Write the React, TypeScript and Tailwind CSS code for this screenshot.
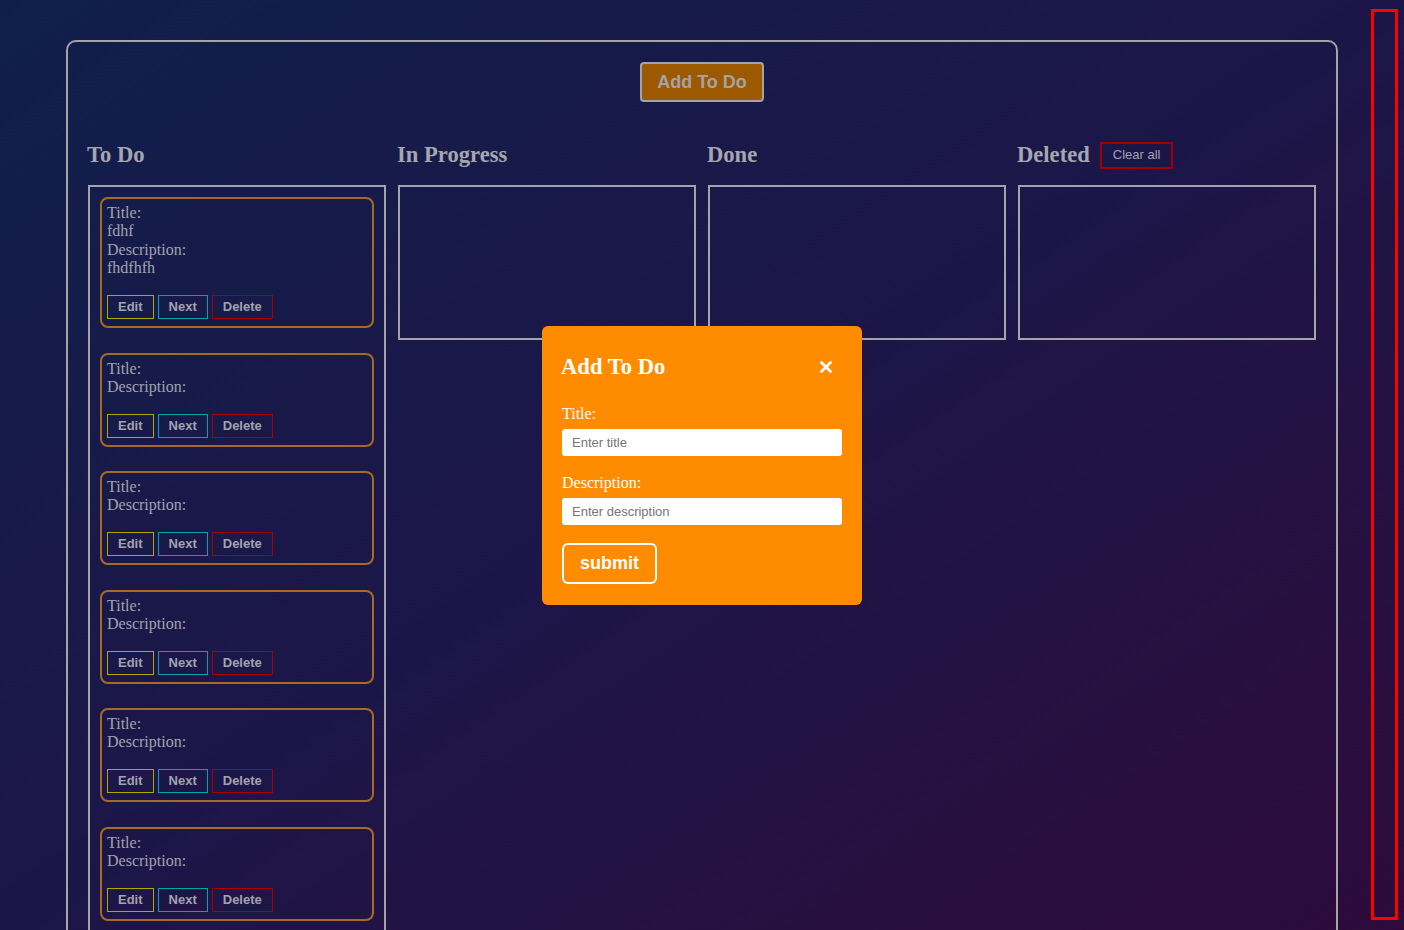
import { X } from "lucide-react";

type Todo = { title: string; description: string };

const TODOS: Todo[] = [
  { title: "fdhf", description: "fhdfhfh" },
  { title: "", description: "" },
  { title: "", description: "" },
  { title: "", description: "" },
  { title: "", description: "" },
  { title: "", description: "" },
];

const serif = "font-['Liberation_Serif',serif]";
const sans = "font-['Liberation_Sans',Arial,sans-serif]";

function TodoCard({ todo }: { todo: Todo }) {
  return (
    <div className="rounded-[8px] border-2 border-[#a66a22] px-[5px] pt-[5px] pb-[7px]">
      <div className={`${serif} text-[16px] leading-[18px] text-[#a3a3ad]`}>
        <div>Title:</div>
        {todo.title && <div className="leading-[18.5px]">{todo.title}</div>}
        <div>Description:</div>
        {todo.description && <div className="leading-[18.5px]">{todo.description}</div>}
      </div>
      <div className={`${sans} mt-[18px] flex gap-[4px] text-[13px] font-bold text-[#a3a3ad]`}>
        <button className="h-6 border border-[#b3a600] px-[10px]">Edit</button>
        <button className="h-6 border border-[#00a6a6] px-[10px]">Next</button>
        <button className="h-6 border border-[#a80000] px-[10px]">Delete</button>
      </div>
    </div>
  );
}

function Column({ title, children, action }: { title: string; children?: React.ReactNode; action?: React.ReactNode }) {
  return (
    <div className="flex flex-col">
      <div className="flex h-[28px] items-center gap-[10px]">
        <h2 className={`${serif} -ml-px text-[22.6px] font-bold leading-[28px] text-[#a6a6ae]`}>{title}</h2>
        {action}
      </div>
      <div className="mt-[16px] flex min-h-[155px] flex-col gap-[24.5px] border-2 border-[#a4a4a8] p-[10px]">
        {children}
      </div>
    </div>
  );
}

export default function App() {
  return (
    <div className="relative h-[930px] w-full overflow-hidden bg-linear-to-br from-[#0f1f4b] via-[#1c1648] to-[#2d0a3b]">
      <div className="mx-[66px] mt-[40px] rounded-[10px] border-2 border-[#a4a4a8] px-[20px] pt-[20px] pb-10">
        <div className="flex justify-center">
          <button
            className={`${sans} h-[40px] rounded-[4px] border-2 border-[#a4a4a8] bg-[#9c5900] px-[15px] text-[18px] font-bold leading-[21px] text-[#a3a3a8]`}
          >
            Add To Do
          </button>
        </div>
        <div className="mt-[39px] grid grid-cols-4 gap-[12px]">
          <Column title="To Do">
            {TODOS.map((t, i) => (
              <TodoCard key={i} todo={t} />
            ))}
          </Column>
          <Column title="In Progress" />
          <Column title="Done" />
          <Column
            title="Deleted"
            action={
              <button className={`${sans} h-[27px] border-2 border-[#a00000] px-[11px] text-[13px] text-[#a3a3ad]`}>
                Clear all
              </button>
            }
          />
        </div>
      </div>

      {/* modal */}
      <div className="fixed inset-0 flex items-center justify-center">
        <div className="w-[320px] rounded-[6px] bg-[#ff8c00] px-[20px] pt-[20px] pb-[21px]">
          <div className="flex h-[42px] items-center justify-between">
            <h2 className={`${serif} -ml-px text-[22.6px] font-bold leading-[28px] text-white`}>Add To Do</h2>
            <X className="mr-[7px] h-[18px] w-[18px] text-white" strokeWidth={3.5} />
          </div>
          <label className={`${serif} mt-[17px] block text-[16px] leading-[18px] text-white`}>Title:</label>
          <input
            className={`${sans} mt-[6px] h-[27px] w-full rounded-[3px] bg-white px-[10px] text-[13px] outline-none placeholder:text-[#757575]`}
            placeholder="Enter title"
          />
          <label className={`${serif} mt-[18px] block text-[16px] leading-[18px] text-white`}>Description:</label>
          <input
            className={`${sans} mt-[6px] h-[27px] w-full rounded-[3px] bg-white px-[10px] text-[13px] outline-none placeholder:text-[#757575]`}
            placeholder="Enter description"
          />
          <button
            className={`${sans} mt-[18px] h-[41px] rounded-[6px] border-2 border-white px-[16px] text-[18px] font-bold text-white`}
          >
            submit
          </button>
        </div>
      </div>

      {/* red frame overlay on the right */}
      <div className="fixed left-[1371px] top-[9px] h-[911px] w-[27px] border-[3px] border-[#ff0000]" />
    </div>
  );
}
